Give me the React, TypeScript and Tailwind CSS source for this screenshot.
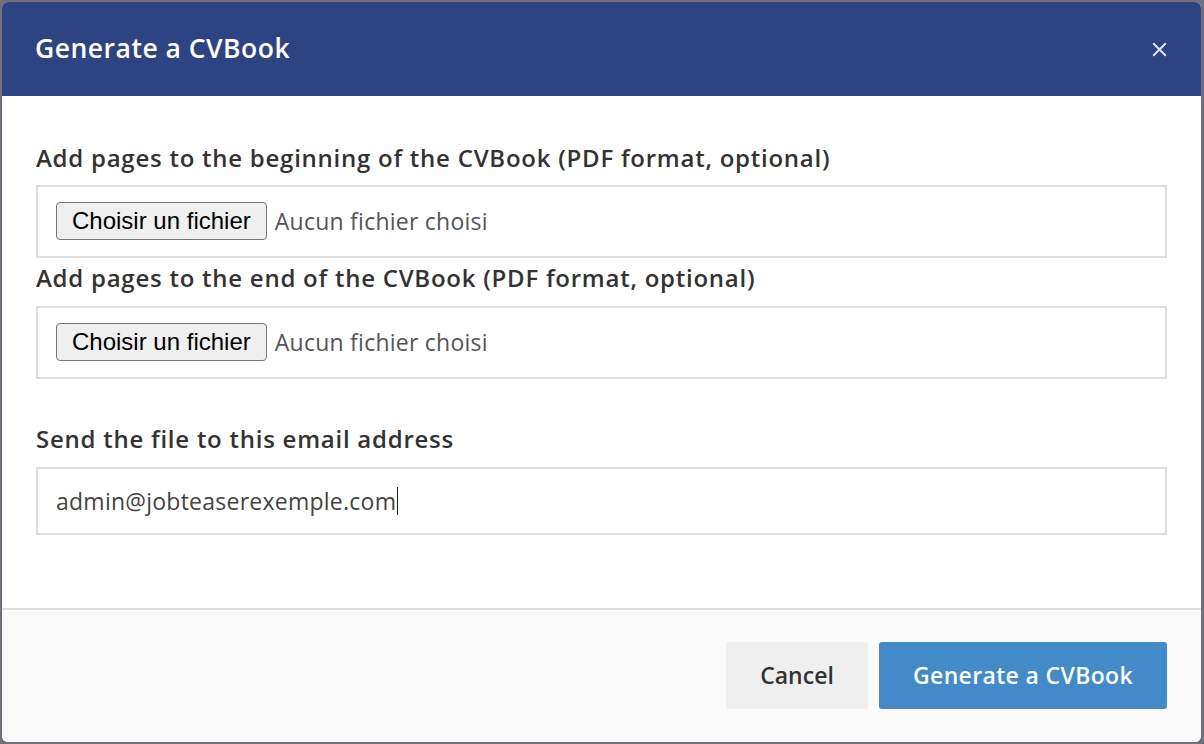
import { X } from "lucide-react";

const sans = "font-['Open_Sans','Noto_Sans',sans-serif]";

function FileField() {
	return (
		<div className="flex h-[73px] items-start border-2 border-[#dddddd] bg-white pl-[18px] pt-[15px]">
			<div className="flex h-[38px] items-center rounded-[4px] border border-[#767676] bg-[#efefef] px-[15px] font-['Liberation_Sans',Arial,sans-serif] text-[24px] text-black">
				Choisir un fichier
			</div>
			<span className={`ml-[8px] mt-[2px] text-[23px] leading-[34px] tracking-[0.25px] text-[#555555] ${sans}`}>
				Aucun fichier choisi
			</span>
		</div>
	);
}

export default function App() {
	return (
		<div className={`flex h-[744px] w-[1204px] bg-[#6f7079] pb-[2px] pl-[2px] pr-[3px] pt-[2px] ${sans}`}>
			<div className="flex flex-1 flex-col overflow-hidden rounded-[6px] bg-white">
				<header className="flex h-[94px] items-center justify-between bg-[#2d4483] pl-[33px] pr-[30px]">
					<h1 className="text-[26.5px] font-semibold tracking-[0.5px] text-white">Generate a CVBook</h1>
					<X className="size-[23px] text-[#dfe3ee]" strokeWidth={2.1} />
				</header>

				<div className="flex h-[512px] flex-col px-[34px] pt-[47px] text-[#333333]">
					<label className="text-[24px] font-semibold leading-[30px] tracking-[0.75px]">
						Add pages to the beginning of the CVBook (PDF format, optional)
					</label>
					<div className="mt-[12px]">
						<FileField />
					</div>

					<label className="mt-[5px] text-[24px] font-semibold leading-[30px] tracking-[0.75px]">
						Add pages to the end of the CVBook (PDF format, optional)
					</label>
					<div className="mt-[13px]">
						<FileField />
					</div>

					<label className="mt-[45px] text-[24px] font-semibold leading-[30px] tracking-[0.75px]">
						Send the file to this email address
					</label>
					<div className="mt-[13px] flex h-[68px] items-center border-2 border-[#dddddd] pl-[18px] text-[23px] tracking-[0.25px] text-[#444444]">
						admin@jobteaserexemple.com
						<span className="ml-px h-[28px] w-px bg-[#222222]" />
					</div>
				</div>

				<footer className="flex flex-1 items-start justify-end gap-[11px] border-t-2 border-[#dddddd] bg-[#fafafa] pr-[34px] pt-[32px]">
					<button className="h-[67px] w-[142px] rounded-[3px] bg-[#efefef] text-[23px] font-semibold text-[#333333]">
						Cancel
					</button>
					<button className="h-[67px] w-[288px] rounded-[3px] bg-[#428bc8] text-[23px] font-semibold tracking-[0.35px] text-white">
						Generate a CVBook
					</button>
				</footer>
			</div>
		</div>
	);
}
